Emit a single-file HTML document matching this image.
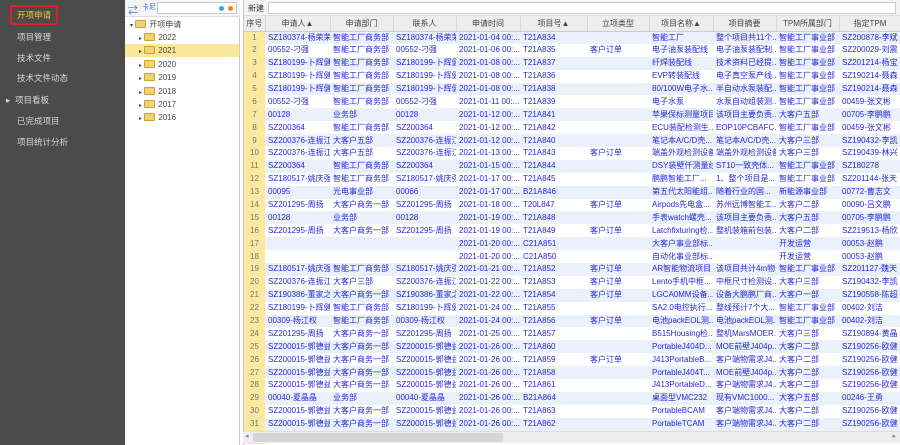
<!DOCTYPE html>
<html><head><meta charset="utf-8"><style>
*{margin:0;padding:0;box-sizing:border-box}
body{width:900px;height:445px;overflow:hidden;background:#fff;font-family:"Liberation Sans","Noto Sans CJK SC",sans-serif;font-size:8px;position:relative}
#side{position:absolute;left:0;top:0;width:125px;height:445px;background:#4b4b4b}
#side div{position:absolute;left:17px;color:#d8d8d8;font-size:8.5px;line-height:12px}
#side .act{color:#f3c13a}
#redbox{position:absolute;left:10px;top:5px;width:48px;height:20px;border:2px solid #e02020;border-radius:2px}
#tree{position:absolute;left:125px;top:0;width:115px;height:445px;background:#fff;border-right:1px solid #ccc}
#ttb{position:absolute;left:0;top:0;width:115px;height:17px;background:#f4f4f4;border-bottom:1px solid #ddd}
.tr{position:absolute;left:0;width:114px;height:13px;line-height:13px;color:#444}
.fold{display:inline-block;width:11px;height:8px;background:#f2d373;border:1px solid #caa23a;border-radius:1px;vertical-align:-1px;margin-right:3px}
#grid{position:absolute;left:243px;top:0;width:657px;height:445px;background:#fff;border-left:1px solid #ccc}
#gtb{position:absolute;left:0;top:0;width:657px;height:16px;background:#f4f4f4;border-bottom:1px solid #ddd}
table{position:absolute;left:0;top:16px;border-collapse:collapse;table-layout:fixed;width:657px}
th{height:15px;background:#ededed;color:#444;font-weight:normal;border-right:1px solid #d8d8d8;border-bottom:1px solid #ccc;font-size:8px;white-space:nowrap;overflow:hidden}
td{height:12.9px;color:#2828d8;white-space:nowrap;overflow:hidden;padding-left:3px;font-size:8px;line-height:12px}
td:first-child{background:#fbe9a0;color:#777;text-align:center;padding:0}
tr:nth-child(even) td{background:#eaf1fb}
tr:nth-child(even) td:first-child{background:#fbe9a0}
#hs{position:absolute;left:243px;top:431px;width:657px;height:12px;background:#eee;border-top:1px solid #ddd}
#thumb{position:absolute;left:10px;top:1px;width:250px;height:9px;background:#d6d6d6;border-radius:2px}
</style></head><body>
<div id="side">
<div class="act" style="top:9px">开项申请</div>
<div style="top:31px">项目管理</div>
<div style="top:52px">技术文件</div>
<div style="top:72px">技术文件动态</div>
<div style="top:94px;left:6px">▸ &nbsp;项目看板</div>
<div style="top:115px">已完成项目</div>
<div style="top:136px">项目统计分析</div>
</div>
<div id="redbox"></div>
<div id="tree">
<div id="ttb"><span style="position:absolute;left:3px;top:2px;color:#3a7ad8;font-size:10px">⇄</span><span style="position:absolute;left:17px;top:2px;color:#3a7ad8;font-size:7px">卡尼</span>
<div style="position:absolute;left:32px;top:2px;width:80px;height:12px;background:#fff;border:1px solid #ccc"><span style="position:absolute;right:12px;top:3px;width:5px;height:5px;border-radius:50%;background:#3aa0e0"></span><span style="position:absolute;right:3px;top:3px;width:5px;height:5px;border-radius:50%;background:#f08030"></span></div></div>
<div class="tr" style="top:18px;padding-left:5px"><span style="font-size:6px">▾</span> <span class="fold"></span>开项申请</div>
<div class="tr" style="top:31px;padding-left:14px"><span style="font-size:6px">▸</span> <span class="fold"></span>2022</div>
<div class="tr" style="top:44px;padding-left:14px;background:#fce89a"><span style="font-size:6px">▸</span> <span class="fold"></span>2021</div>
<div class="tr" style="top:58px;padding-left:14px"><span style="font-size:6px">▸</span> <span class="fold"></span>2020</div>
<div class="tr" style="top:71px;padding-left:14px"><span style="font-size:6px">▸</span> <span class="fold"></span>2019</div>
<div class="tr" style="top:85px;padding-left:14px"><span style="font-size:6px">▸</span> <span class="fold"></span>2018</div>
<div class="tr" style="top:98px;padding-left:14px"><span style="font-size:6px">▸</span> <span class="fold"></span>2017</div>
<div class="tr" style="top:111px;padding-left:14px"><span style="font-size:6px">▸</span> <span class="fold"></span>2016</div>
</div>
<div id="grid">
<div id="gtb"><span style="position:absolute;left:4px;top:3px;color:#333">新建</span><div style="position:absolute;left:24px;top:2px;width:628px;height:12px;background:#fff;border:1px solid #ccc"></div></div>
<table>
<colgroup><col style="width:21px"><col style="width:65px"><col style="width:63px"><col style="width:63px"><col style="width:64px"><col style="width:67px"><col style="width:62px"><col style="width:64px"><col style="width:63px"><col style="width:63px"><col style="width:62px"></colgroup>
<tr><th>序号</th><th>申请人▲</th><th>申请部门</th><th>联系人</th><th>申请时间</th><th>项目号▲</th><th>立项类型</th><th>项目名称▲</th><th>项目摘要</th><th>TPM所属部门</th><th>指定TPM</th></tr>
<tr><td>1</td><td>SZ180374-杨荣荣</td><td>智能工厂商务部</td><td>SZ180374-杨荣荣</td><td>2021-01-04 00:...</td><td>T21A834</td><td></td><td>智能工厂</td><td>整个项目共11个...</td><td>智能工厂事业部</td><td>SZ200878-李斌</td></tr>
<tr><td>2</td><td>00552-刁强</td><td>智能工厂商务部</td><td>00552-刁强</td><td>2021-01-06 00:...</td><td>T21A835</td><td>客户订单</td><td>电子油泵装配线</td><td>电子油泵装配制...</td><td>智能工厂事业部</td><td>SZ200029-刘震</td></tr>
<tr><td>3</td><td>SZ180199-卜辉健</td><td>智能工厂商务部</td><td>SZ180199-卜辉健</td><td>2021-01-08 00:...</td><td>T21A837</td><td></td><td>纤焊装配线</td><td>技术资料已经提...</td><td>智能工厂事业部</td><td>SZ201214-杨宝</td></tr>
<tr><td>4</td><td>SZ180199-卜辉健</td><td>智能工厂商务部</td><td>SZ180199-卜辉健</td><td>2021-01-08 00:...</td><td>T21A836</td><td></td><td>EVP转装配线</td><td>电子真空泵产线...</td><td>智能工厂事业部</td><td>SZ190214-聂森</td></tr>
<tr><td>5</td><td>SZ180199-卜辉健</td><td>智能工厂商务部</td><td>SZ180199-卜辉健</td><td>2021-01-08 00:...</td><td>T21A838</td><td></td><td>80/100W电子水...</td><td>半自动水泵装配...</td><td>智能工厂事业部</td><td>SZ190214-聂森</td></tr>
<tr><td>6</td><td>00552-刁强</td><td>智能工厂商务部</td><td>00552-刁强</td><td>2021-01-11 00:...</td><td>T21A839</td><td></td><td>电子水泵</td><td>水泵自动组装测...</td><td>智能工厂事业部</td><td>00459-张文彬</td></tr>
<tr><td>7</td><td>00128</td><td>业务部</td><td>00128</td><td>2021-01-12 00:...</td><td>T21A841</td><td></td><td>苹果保标测量项目</td><td>该项目主要负责...</td><td>大客户五部</td><td>00705-李鹏鹏</td></tr>
<tr><td>8</td><td>SZ200364</td><td>智能工厂商务部</td><td>SZ200364</td><td>2021-01-12 00:...</td><td>T21A842</td><td></td><td>ECU装配检测生...</td><td>EOP10PCBAFC...</td><td>智能工厂事业部</td><td>00459-张文彬</td></tr>
<tr><td>9</td><td>SZ200376-连振江</td><td>大客户五部</td><td>SZ200376-连振江</td><td>2021-01-12 00:...</td><td>T21A840</td><td></td><td>笔记本A/C/D壳...</td><td>笔记本A/C/D壳...</td><td>大客户三部</td><td>SZ190432-李凯</td></tr>
<tr><td>10</td><td>SZ200376-连振江</td><td>大客户五部</td><td>SZ200376-连振江</td><td>2021-01-13 00:...</td><td>T21A843</td><td>客户订单</td><td>端盖外观检测设备</td><td>端盖外观检测设备</td><td>大客户三部</td><td>SZ190439-林兴</td></tr>
<tr><td>11</td><td>SZ200364</td><td>智能工厂商务部</td><td>SZ200364</td><td>2021-01-15 00:...</td><td>T21A844</td><td></td><td>DSY装壁仟测量线</td><td>ST10一致壳体...</td><td>智能工厂事业部</td><td>SZ180278</td></tr>
<tr><td>12</td><td>SZ180517-姚庆强</td><td>智能工厂商务部</td><td>SZ180517-姚庆强</td><td>2021-01-17 00:...</td><td>T21A845</td><td></td><td>鹏鹏智能工厂...</td><td>1、整个项目是...</td><td>智能工厂事业部</td><td>SZ201144-张天</td></tr>
<tr><td>13</td><td>00095</td><td>光电事业部</td><td>00066</td><td>2021-01-17 00:...</td><td>B21A846</td><td></td><td>第五代太阳能组...</td><td>随着行业的国...</td><td>新能源事业部</td><td>00772-曹志文</td></tr>
<tr><td>14</td><td>SZ201295-周扬</td><td>大客户商务一部</td><td>SZ201295-周扬</td><td>2021-01-18 00:...</td><td>T20L847</td><td>客户订单</td><td>Airpods先电盒...</td><td>苏州远博智能工...</td><td>大客户二部</td><td>00090-吕文鹏</td></tr>
<tr><td>15</td><td>00128</td><td>业务部</td><td>00128</td><td>2021-01-19 00:...</td><td>T21A848</td><td></td><td>手表watch螺壳...</td><td>该项目主要负责...</td><td>大客户五部</td><td>00705-李鹏鹏</td></tr>
<tr><td>16</td><td>SZ201295-周扬</td><td>大客户商务一部</td><td>SZ201295-周扬</td><td>2021-01-19 00:...</td><td>T21A849</td><td>客户订单</td><td>Latchfixturing检...</td><td>整机装箱前包装...</td><td>大客户二部</td><td>SZ219513-杨欣</td></tr>
<tr><td>17</td><td></td><td></td><td></td><td>2021-01-20 00:...</td><td>C21A851</td><td></td><td>大客户事业部标...</td><td></td><td>开发运营</td><td>00053-赵鹏</td></tr>
<tr><td>18</td><td></td><td></td><td></td><td>2021-01-20 00:...</td><td>C21A850</td><td></td><td>自动化事业部标...</td><td></td><td>开发运营</td><td>00053-赵鹏</td></tr>
<tr><td>19</td><td>SZ180517-姚庆强</td><td>智能工厂商务部</td><td>SZ180517-姚庆强</td><td>2021-01-21 00:...</td><td>T21A852</td><td>客户订单</td><td>AR智能物流项目</td><td>该项目共计4m物...</td><td>智能工厂事业部</td><td>SZ201127-魏天</td></tr>
<tr><td>20</td><td>SZ200376-连振江</td><td>大客户三部</td><td>SZ200376-连振江</td><td>2021-01-22 00:...</td><td>T21A853</td><td>客户订单</td><td>Lento手机中框...</td><td>中框尺寸检测设...</td><td>大客户三部</td><td>SZ190432-李凯</td></tr>
<tr><td>21</td><td>SZ190386-董家之</td><td>大客户商务一部</td><td>SZ190386-董家之</td><td>2021-01-22 00:...</td><td>T21A854</td><td>客户订单</td><td>LGCA0MM设备...</td><td>设备大鹏鹏厂商...</td><td>大客户一部</td><td>SZ190558-陈超</td></tr>
<tr><td>22</td><td>SZ180199-卜辉健</td><td>智能工厂商务部</td><td>SZ180199-卜辉健</td><td>2021-01-24 00:...</td><td>T21A855</td><td></td><td>SA2.0电控执行...</td><td>整线预计7个大...</td><td>智能工厂事业部</td><td>00402-刘洁</td></tr>
<tr><td>23</td><td>00309-杨江权</td><td>智能工厂商务部</td><td>00309-杨江权</td><td>2021-01-24 00:...</td><td>T21A856</td><td>客户订单</td><td>电池packEOL测...</td><td>电池packEOL测...</td><td>智能工厂事业部</td><td>00402-刘洁</td></tr>
<tr><td>24</td><td>SZ201295-周扬</td><td>大客户商务一部</td><td>SZ201295-周扬</td><td>2021-01-25 00:...</td><td>T21A857</td><td></td><td>B515Housing检...</td><td>整机MarsMOER...</td><td>大客户三部</td><td>SZ190894-黄晶</td></tr>
<tr><td>25</td><td>SZ200015-郭德益</td><td>大客户商务一部</td><td>SZ200015-郭德益</td><td>2021-01-26 00:...</td><td>T21A860</td><td></td><td>PortableJ404D...</td><td>MOE前壁J404p...</td><td>大客户二部</td><td>SZ190256-欧健</td></tr>
<tr><td>26</td><td>SZ200015-郭德益</td><td>大客户商务一部</td><td>SZ200015-郭德益</td><td>2021-01-26 00:...</td><td>T21A859</td><td>客户订单</td><td>J413PortableB...</td><td>客户端物需求J4...</td><td>大客户二部</td><td>SZ190256-欧健</td></tr>
<tr><td>27</td><td>SZ200015-郭德益</td><td>大客户商务一部</td><td>SZ200015-郭德益</td><td>2021-01-26 00:...</td><td>T21A858</td><td></td><td>PortableJ404T...</td><td>MOE前壁J404p...</td><td>大客户二部</td><td>SZ190256-欧健</td></tr>
<tr><td>28</td><td>SZ200015-郭德益</td><td>大客户商务一部</td><td>SZ200015-郭德益</td><td>2021-01-26 00:...</td><td>T21A861</td><td></td><td>J413PortableD...</td><td>客户端物需求J4...</td><td>大客户二部</td><td>SZ190256-欧健</td></tr>
<tr><td>29</td><td>00040-夏晶晶</td><td>业务部</td><td>00040-夏晶晶</td><td>2021-01-26 00:...</td><td>B21A864</td><td></td><td>桌面型VMC232</td><td>现有VMC1000...</td><td>大客户五部</td><td>00246-王勇</td></tr>
<tr><td>30</td><td>SZ200015-郭德益</td><td>大客户商务一部</td><td>SZ200015-郭德益</td><td>2021-01-26 00:...</td><td>T21A863</td><td></td><td>PortableBCAM</td><td>客户端物需求J4...</td><td>大客户二部</td><td>SZ190256-欧健</td></tr>
<tr><td>31</td><td>SZ200015-郭德益</td><td>大客户商务一部</td><td>SZ200015-郭德益</td><td>2021-01-26 00:...</td><td>T21A862</td><td></td><td>PortableTCAM</td><td>客户端物需求J4...</td><td>大客户二部</td><td>SZ190256-欧健</td></tr>
<tr><td>32</td><td>SZ200015-郭德益</td><td>大客户商务一部</td><td>SZ200015-郭德益</td><td>2021-01-27 00:...</td><td>T21A865</td><td></td><td>B515Housing...</td><td>整机MarsMOER...</td><td>大客户二部</td><td>SZ190256-欧健</td></tr>
</table>
</div>
<div id="hs"><span style="position:absolute;left:2px;top:0;color:#888;font-size:7px">◂</span><div id="thumb"></div><span style="position:absolute;right:4px;top:0;color:#888;font-size:7px">▸</span></div>
</body></html>
